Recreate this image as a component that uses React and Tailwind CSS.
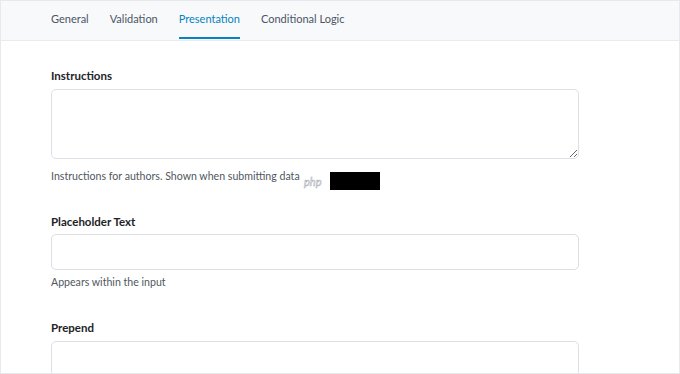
import React from "react";

const tabs = ["General", "Validation", "Presentation", "Conditional Logic"];

const Field = ({ label, children, className = "" }) => (
  <div className={className}>
    <label className="block text-[11.5px] font-bold text-[#1d2327] leading-none">{label}</label>
    <div className="mt-[7px]">{children}</div>
  </div>
);

const App = () => {
  return (
    <div
      className="w-[680px] h-[374px] overflow-hidden border border-[#e7e9ec] bg-white"
      style={{ fontFamily: "Lato, 'Noto Sans', sans-serif" }}
    >
      {/* Tabs */}
      <div className="h-[40px] bg-[#f8f9fb] border-b border-[#e8eaee] flex pl-[50px] gap-[21px]">
        {tabs.map((t) => (
          <div
            key={t}
            className={`relative flex items-center pb-[3px] text-[11px] ${
              t === "Presentation" ? "text-[#0783be]" : "text-[#4b5563]"
            }`}
          >
            {t}
            {t === "Presentation" && (
              <span className="absolute left-0 right-0 bottom-[1px] h-[2px] bg-[#0783be]" />
            )}
          </div>
        ))}
      </div>

      <div className="pl-[50px] pt-[29px]">
        <Field label="Instructions">
          <textarea className="block w-[528px] h-[70px] rounded-[5px] border border-[#dcdfe6] resize-y" />
        </Field>
        <p className="relative mt-[12px] h-[11px] text-[10.6px] text-[#50575e] leading-none">
          Instructions for authors. Shown when submitting data
          {/* screenshot watermark + redaction */}
          <span className="absolute left-[253px] top-[5px] italic text-[11px] text-white [-webkit-text-stroke:0.5px_#a3a8b0]">php</span>
          <span className="absolute left-[279px] top-[1px] w-[50px] h-[18px] bg-black" />
        </p>

        <Field label="Placeholder Text" className="mt-[34px]">
          <input className="block w-[528px] h-[36px] rounded-[5px] border border-[#dcdfe6]" />
        </Field>
        <p className="mt-[7px] h-[11px] text-[10.6px] text-[#50575e] leading-none">Appears within the input</p>

        <Field label="Prepend" className="mt-[34px]">
          <input className="block w-[528px] h-[36px] rounded-[5px] border border-[#dcdfe6]" />
        </Field>
      </div>
    </div>
  );
};

export default App;
